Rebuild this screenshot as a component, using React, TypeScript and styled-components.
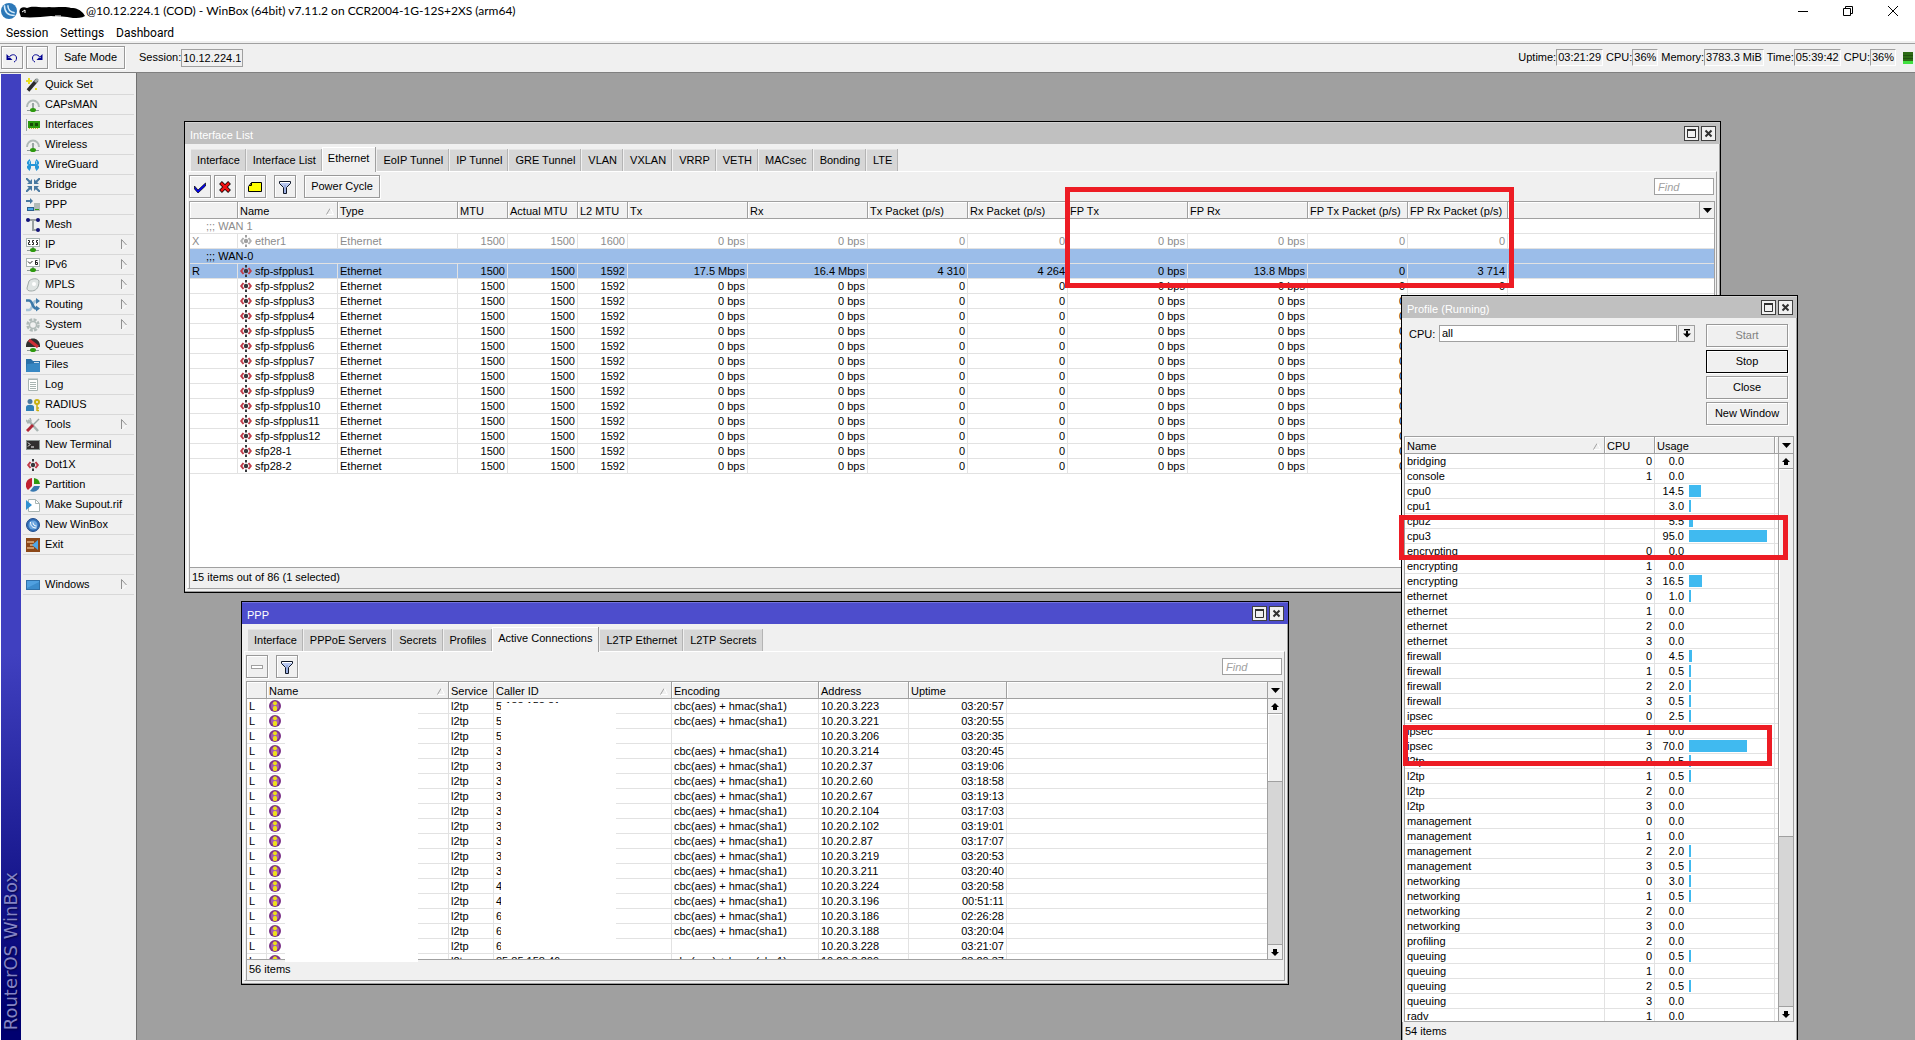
import React from "react";
import styled, { createGlobalStyle, css } from "styled-components";

const FACE = "#f0f0f0";
const LINE = "#a0a0a0";
const GRID = "#e2e2e2";
const UI = '"Liberation Sans", Arial, sans-serif';
const SYS = 'Roboto, "Noto Sans", sans-serif';

const Global = createGlobalStyle`
  *, *::before, *::after { box-sizing: border-box; }
  body { margin: 0; background: ${FACE}; color: #000; font: 11px/15px ${UI}; overflow: hidden; }
  button, input, select { font: inherit; color: inherit; margin: 0; padding: 0; border: 0; border-radius: 0; background: none; outline: 0; }
  svg { display: block; flex: none; }
`;

const Shell = styled.div`
  display: flex;
  flex-direction: column;
  height: 100vh;
`;
const Caption = styled.header`
  display: flex;
  align-items: center;
  height: 22px;
  padding: 0 0 0 1px;
  background: #fff;
  font: 12px/18px Lato, ${SYS};
  white-space: nowrap;
`;
const CaptionText = styled.span`
  flex: 1;
`;
const CaptionButton = styled.button`
  display: grid;
  place-items: center;
  width: 45px;
  height: 22px;
`;
const MenuBar = styled.nav`
  display: flex;
  gap: 12px;
  height: 19px;
  padding-left: 6px;
  background: #fff;
  font: 12px/22px ${SYS};
`;
const MainBar = styled.div`
  display: flex;
  align-items: center;
  gap: 3px;
  height: 32px;
  padding: 2px 2px 0 1px;
  border-bottom: 1px solid #808080;
  box-shadow: inset 0 2px ${FACE}, inset 0 3px ${LINE};
`;
const Raised = styled.button<{ $w?: number; $tone?: "default" | "dim" }>`
  display: grid;
  place-items: center;
  flex: none;
  width: ${(p) => p.$w ?? 22}px;
  height: 23px;
  border: 1px solid ${(p) => (p.$tone === "default" ? "#000" : "#999")};
  box-shadow: inset 1px 1px #fff, 1px 1px #fff;
  color: ${(p) => (p.$tone === "dim" ? "#808080" : "#000")};
  white-space: nowrap;
`;
const Space = styled.span<{ $w: number }>`
  flex: none;
  width: ${(p) => p.$w}px;
`;
const SessionBox = styled.div`
  display: flex;
  align-items: center;
`;
const Field = styled.input<{ $w: number }>`
  width: ${(p) => p.$w}px;
  height: 18px;
  padding: 0 1px;
  border: 1px solid ${LINE};
`;
const Stats = styled.div`
  display: flex;
  align-items: center;
  margin-left: auto;
`;
const Stat = styled.label`
  display: flex;
  align-items: center;
  margin-right: 3px;
`;
const StatValue = styled.output`
  height: 17px;
  padding: 0 1px;
  border: 1px solid #fff;
  border-top-color: ${LINE};
  border-left-color: ${LINE};
`;

const Main = styled.div`
  display: flex;
  flex: 1;
  min-height: 0;
`;
const Brand = styled.div`
  display: flex;
  align-items: center;
  justify-content: center;
  width: 21px;
  margin-top: 1px;
  padding: 0 0 10px;
  border-left: 1px solid #fff;
  background: linear-gradient(#4040c0 0%, #4040c0 60%, #000070 97%);
  color: #8484c4;
  font: 18px/20px "DejaVu Sans", sans-serif;
  text-shadow: -1px 1px 2px #000040;
  writing-mode: vertical-rl;
`;
const BrandText = styled.span`
  margin-top: auto;
  transform: rotate(180deg);
`;
const Side = styled.nav`
  width: 116px;
  padding: 2px 2px 0;
  border-right: 1px solid #707070;
`;
const SideItem = styled.button`
  display: flex;
  align-items: center;
  gap: 5px;
  width: 111px;
  height: 20px;
  padding: 0 6px 0 3px;
  border-bottom: 1px solid #d8d8d8;
  white-space: nowrap;
`;
const SideLabel = styled.span`
  flex: 1;
  text-align: left;
`;
const SideGap = styled.div`
  height: 20px;
  width: 111px;
  border-bottom: 1px solid #d8d8d8;
`;

const Desk = styled.main`
  position: relative;
  flex: 1;
  overflow: hidden;
  background: ${LINE};
`;
type Box = { $x: number; $y: number; $w: number; $h: number };
const Frame = styled.section<Box>`
  position: absolute;
  left: ${(p) => p.$x}px;
  top: ${(p) => p.$y}px;
  width: ${(p) => p.$w}px;
  height: ${(p) => p.$h}px;
  display: flex;
  flex-direction: column;
  border: 1px solid #000;
  background: ${FACE};
  box-shadow: inset -1px -1px ${LINE};
`;
const FrameTitle = styled.div<{ $active?: boolean }>`
  display: flex;
  align-items: center;
  gap: 2px;
  height: 22px;
  padding: 0 4px 0 5px;
  color: #fff;
  background: ${(p) => (p.$active ? "#4d4dcc" : "#c0c0c0")};
  box-shadow: inset 0 1px ${(p) => (p.$active ? "#7474dc" : "#d2d2d2")};
`;
const FrameName = styled.span`
  flex: 1;
  padding-top: 4px;
`;
const FrameButton = styled.button`
  display: grid;
  place-items: center;
  width: 15px;
  height: 15px;
  border: 1px solid #404040;
  background: ${FACE};
`;
const Tabs = styled.div`
  display: flex;
  align-items: flex-end;
  gap: 1px;
  height: 27px;
  padding-left: 6px;
`;
const Tab = styled.button<{ $on?: boolean }>`
  height: 22px;
  padding: 1px 5px 0 6px;
  border-right: 1px solid #b4b4b4;
  background: #d6d6d6;
  box-shadow: inset 0 1px #e4e4e4;
  white-space: nowrap;
  ${(p) =>
    p.$on &&
    css`
      z-index: 1;
      height: 25px;
      margin: 0 0 -1px -1px;
      padding: 0 6px 2px;
      border-right-color: ${LINE};
      background: ${FACE};
      box-shadow: inset 1px 1px #fff;
    `}
`;
const Panel = styled.div`
  display: flex;
  flex-direction: column;
  flex: 1;
  min-height: 0;
  margin: 0 3px 3px 2px;
  padding: 0 1px;
  border: 1px solid ${LINE};
  border-top-color: #fff;
  border-left-color: #fff;
`;
const Tools = styled.div`
  display: flex;
  align-items: center;
  gap: 3px;
  height: 29px;
  padding-right: 1px;
`;
const Find = styled.input`
  width: 60px;
  height: 17px;
  margin-left: auto;
  padding: 0 3px;
  border: 1px solid ${LINE};
  background: #fff;
  font-style: italic;
  &::placeholder { color: ${LINE}; opacity: 1; }
`;
const Sheet = styled.div`
  display: flex;
  flex: 1;
  min-height: 0;
  border: 1px solid ${LINE};
  background: #fff;
`;
const SheetBody = styled.div`
  flex: 1;
  min-width: 0;
  overflow: hidden;
`;
const Grid = styled.table`
  width: 100%;
  table-layout: fixed;
  border-collapse: separate;
  border-spacing: 0;
  line-height: 14px;
`;
const Th = styled.th`
  height: 17px;
  padding: 2px 2px 0;
  border-right: 1px solid ${LINE};
  border-bottom: 1px solid ${LINE};
  background: ${FACE};
  box-shadow: inset 1px 1px #fff;
  font-weight: normal;
  text-align: left;
  white-space: nowrap;
  &:last-child { border-right: 0; padding: 0; }
`;
const HeadInner = styled.span`
  display: flex;
  align-items: center;
  justify-content: space-between;
  padding-right: 1px;
`;
const Tr = styled.tr<{ $tone?: "off" | "sel" }>`
  color: ${(p) => (p.$tone === "off" ? "#8c8c8c" : "#000")};
  background: ${(p) => (p.$tone === "sel" ? "#9bbde9" : "#fff")};
`;
const Td = styled.td<{ $right?: boolean; $note?: boolean }>`
  height: 15px;
  padding: 0 2px;
  padding-left: ${(p) => (p.$note ? 16 : 2)}px;
  border-right: 1px solid ${GRID};
  border-bottom: 1px solid ${GRID};
  text-align: ${(p) => (p.$right ? "right" : "left")};
  white-space: nowrap;
  overflow: hidden;
  &:last-child { border-right: 0; }
`;
const NameCell = styled.span`
  display: flex;
  align-items: center;
  gap: 3px;
  height: 14px;
`;
const UsageCell = styled.span`
  display: flex;
  align-items: center;
  gap: 5px;
  height: 14px;
`;
const UsageValue = styled.span`
  width: 27px;
  text-align: right;
`;
const Bar = styled.span`
  height: 12px;
  background: #40baf0;
`;
const HeadMenu = styled.button`
  display: grid;
  place-items: center;
  width: 15px;
  height: 16px;
  margin-left: auto;
  border-left: 1px solid ${LINE};
  background: ${FACE};
`;
const Scroll = styled.div`
  display: flex;
  flex-direction: column;
  width: 15px;
  background: #d6d6d6;
  border-left: 1px solid ${LINE};
`;
const ScrollHead = styled.button`
  display: grid;
  place-items: center;
  height: 17px;
  border-bottom: 1px solid ${LINE};
  background: ${FACE};
`;
const ScrollStep = styled.button<{ $end?: boolean }>`
  display: grid;
  place-items: center;
  height: 15px;
  margin-top: ${(p) => (p.$end ? "auto" : 0)};
  border-bottom: ${(p) => (p.$end ? 0 : 1)}px solid ${LINE};
  border-top: ${(p) => (p.$end ? 1 : 0)}px solid ${LINE};
  background: ${FACE};
`;
const Thumb = styled.div`
  border-bottom: 1px solid ${LINE};
  background: ${FACE};
  box-shadow: inset 1px 1px #fff;
`;
const Status = styled.div`
  height: 20px;
  padding: 2px 2px 0;
  border-left: 1px solid ${LINE};
`;
const Mask = styled.div<Box>`
  position: absolute;
  left: ${(p) => p.$x}px;
  top: ${(p) => p.$y}px;
  width: ${(p) => p.$w}px;
  height: ${(p) => p.$h}px;
  background: #fff;
`;
const Marker = styled.div<Box>`
  position: absolute;
  left: ${(p) => p.$x}px;
  top: ${(p) => p.$y}px;
  width: ${(p) => p.$w}px;
  height: ${(p) => p.$h}px;
  border: 5px solid #ed1c24;
  pointer-events: none;
`;
const ProfileTop = styled.div`
  display: flex;
  gap: 11px;
  height: 118px;
  padding: 6px 9px 0 7px;
`;
const CpuRow = styled.div`
  display: flex;
  flex: 1;
  align-items: flex-start;
  gap: 1px;
  padding-top: 1px;
`;
const CpuLabel = styled.label`
  width: 29px;
  padding-top: 2px;
`;
const CpuSelect = styled.select`
  flex: 1;
  height: 17px;
  padding-left: 2px;
  border: 1px solid ${LINE};
  background: #fff;
  appearance: none;
`;
const DropButton = styled.button`
  display: grid;
  place-items: center;
  width: 17px;
  height: 17px;
  border: 1px solid ${LINE};
`;
const Actions = styled.div`
  display: flex;
  flex-direction: column;
  gap: 3px;
`;
const ProfileList = styled.div`
  display: flex;
  flex-direction: column;
  height: 586px;
  margin: 0 3px 0 2px;
`;

/* Icons */
const Ic = ({ s = 14, children }: { s?: number; children: React.ReactNode }) => (
  <svg width={s} height={s} viewBox={`0 0 ${s} ${s}`} aria-hidden="true">{children}</svg>
);
const Cap = () => (
  <Ic>
    <path d="M1 9A6 6.500 0 1 1 13 9" fill="none" stroke="#b0bab8" strokeWidth="2" />
    <path d="M4.500 7.500A3 3 0 0 1 9.500 7.500" fill="none" stroke="#dde2e1" />
    <path d="M7 5v6" stroke="#9aa6a4" strokeWidth="2" />
    <path d="M1 12.500h12" stroke="#8e9a98" />
    <ellipse cx="7" cy="12" rx="3" ry="2" fill="#2e9a10" />
  </Ic>
);
const PortShape = ({ off }: { off?: boolean }) => {
  const a = off ? "#b0b0b0" : "#c03a48";
  const b = off ? "#a0a0a0" : "#38383c";
  return (
    <>
      <path d="M3.500 3L1.200 6l2.300 3M8.500 3l2.300 3-2.300 3" fill="none" stroke={a} strokeWidth="2" />
      <circle cx="6" cy="6" r="2.200" fill={b} />
      <path d="M6 0v2.500M6 9.500v2.500" stroke={b} strokeWidth="2" />
    </>
  );
};
const Person = () => (
  <Ic s={12}>
    <circle cx="6" cy="6" r="6" fill="#7b3087" />
    <circle cx="6" cy="6" r="4" fill="#a560ad" />
    <circle cx="6" cy="3.200" r="2" fill="#ece01a" />
    <rect x="4" y="6" width="4" height="5" rx="1.500" fill="#ece01a" />
  </Ic>
);
const Funnel = () => (
  <Ic>
    <path d="M1.500 1.500h11v2l-4 4v6h-3v-6l-4-4z" fill="#b8c8f0" stroke="#101828" />
    <path d="M7 5v8" stroke="#7c92d0" />
    <path d="M2 2.500h10" stroke="#fff" />
  </Ic>
);
const Ball = () => (
  <Ic>
    <circle cx="7" cy="7" r="6.500" fill="#2f6cb4" stroke="#244f8c" />
    <circle cx="7" cy="7" r="4.500" fill="#6aa4de" />
    <path d="M4.500 4c0 4 2 6 6 6M7 4.500c0 2 1.500 3.500 3.500 3.500" fill="none" stroke="#fff" />
  </Ic>
);
const AppLogo = () => (
  <svg width="16" height="16" viewBox="0 0 14 14" aria-hidden="true">
    <circle cx="7" cy="7" r="7" fill="#2c78b8" />
    <path d="M3 2c0 6 3 9 9 9M6 2c0 4 2 6 6 6.500" fill="none" stroke="#d8ecfa" strokeWidth="1.300" />
  </svg>
);
const Turn = ({ back }: { back?: boolean }) => (
  <Ic>
    <g transform={back ? undefined : "matrix(-1 0 0 1 14 0)"}>
      <path d="M4 6.500C6 2.500 11.500 3 11.500 7c0 2-1 3.500-2.500 4" fill="none" stroke="#000090" />
      <path d="M1.500 3v6h6z" fill="#000090" />
      <path d="M3.500 7l1-1" stroke="#fff" />
    </g>
  </Ic>
);
const Plate = ({ t }: { t: "ip" | "v6" }) => (
  <Ic>
    <rect x=".5" y=".5" width="13" height="8" fill="#fff" stroke="#a8b4b2" />
    {t === "ip" ? (
      <path d="M2 2.500h1.500v2H2.500v2h2M8 2.500H6.500v2h1v2H6M12 2.500h-1.500v2h1v2H10" fill="none" stroke="#222" />
    ) : (
      <path d="M2 3.500l2 2L6.500 3M11.500 2.500H9.500v4h2v-2h-2" fill="none" stroke="#222" />
    )}
    <path d="M7 9v2" stroke="#9aa6a4" strokeWidth="2" />
    <path d="M1 12.500h12" stroke="#8e9a98" />
    <ellipse cx="7" cy="12" rx="3" ry="2" fill="#2e9a10" />
  </Ic>
);
const icons: Record<string, React.ReactNode> = {
  "Quick Set": (
    <Ic>
      <path d="M2 12.500L11 2" stroke="#2c2c2c" strokeWidth="3.500" />
      <path d="M9 4l3-3" stroke="#a0a8a8" strokeWidth="3" />
      <path d="M3 0v6M0 3h6M10 10v2" stroke="#e8e020" strokeWidth="2" />
    </Ic>
  ),
  CAPsMAN: <Cap />,
  Interfaces: (
    <Ic>
      <path d="M.5 1v12" stroke="#9aa6a4" />
      <rect x="2" y="3" width="12" height="7" fill="#2e9a10" />
      <path d="M4 5h3v3H4zM9 5h3v3H9z" fill="#184c08" />
      <path d="M3 10.500h10" stroke="#c8b820" strokeDasharray="1 1" />
    </Ic>
  ),
  Wireless: <Cap />,
  WireGuard: (
    <Ic>
      <path d="M3.500 1L1 4v2l1.500 1L1 8v2l2.500 3L5 10V8h4v2l1.500 3L13 10V8l-1.500-1L13 6V4l-2.500-3L9 4v2H5V4z" fill="#2796d8" />
      <path d="M3.500 3v3M10.500 3v3" stroke="#80c8f0" />
    </Ic>
  ),
  Bridge: (
    <Ic>
      <path d="M0 0l5 5M14 0L9 5M0 14l5-5M14 14L9 9" stroke="#4878a0" strokeWidth="2" />
      <path d="M1 6h5V1zM13 6H8V1zM1 8h5v5zM13 8H8v5z" fill="#4878a0" />
    </Ic>
  ),
  PPP: (
    <Ic>
      <path d="M0 3h5" stroke="#4878a0" strokeWidth="2" />
      <path d="M4 0l3 3-3 3z" fill="#4878a0" />
      <rect x="8" y="5" width="6" height="8" fill="#b0bab8" />
      <path d="M9 11.500h4" stroke="#2e9a10" />
      <rect x="1.500" y="9.500" width="6" height="3" fill="#50a8e8" stroke="#2c608c" />
    </Ic>
  ),
  Mesh: (
    <Ic>
      <path d="M2 2h10M7 2v10h5" fill="none" stroke="#9aa0a0" strokeWidth="2" />
      <circle cx="2" cy="2" r="2" fill="#141478" />
      <circle cx="12" cy="2" r="2" fill="#141478" />
      <circle cx="12" cy="12" r="2" fill="#141478" />
    </Ic>
  ),
  IP: <Plate t="ip" />,
  IPv6: <Plate t="v6" />,
  MPLS: (
    <Ic>
      <path d="M1 10L3 3c3-3 9-3 10 0 0 8-4 10-8 10-3 0-4-1-4-3z" fill="#dfe4e3" stroke="#a0aaa8" />
      <circle cx="8" cy="6" r="2" fill="#fff" />
    </Ic>
  ),
  Routing: (
    <Ic>
      <path d="M0 12h3c4 0 3-9 7-9" fill="none" stroke="#a8c4d8" strokeWidth="2.500" />
      <path d="M0 2.500h3c4 0 3 8 7 8" fill="none" stroke="#3c78a8" strokeWidth="2.500" />
      <path d="M10 0l4 3-4 3zM10 7.500l4 3-4 3z" fill="#3c78a8" />
    </Ic>
  ),
  System: (
    <Ic>
      <circle cx="7" cy="7" r="5.500" fill="none" stroke="#b0bab8" strokeWidth="2.500" strokeDasharray="3 1.300" />
      <circle cx="7" cy="7" r="3.500" fill="none" stroke="#b0bab8" strokeWidth="1.500" />
    </Ic>
  ),
  Queues: (
    <Ic>
      <path d="M0 8C0-2 14-2 14 8v1H0z" fill="#303030" />
      <path d="M3 2l9 7" stroke="#d03038" strokeWidth="3" />
      <path d="M1 12.500h12" stroke="#8e9a98" />
      <ellipse cx="7" cy="12" rx="3" ry="2" fill="#2e9a10" />
    </Ic>
  ),
  Files: (
    <Ic>
      <path d="M0 1h5l2 2h7v11H0z" fill="#2a70a8" />
      <path d="M0 14l1-8 13-1v9z" fill="#3888c4" />
      <path d="M8 4.500h5" stroke="#c8dcec" />
    </Ic>
  ),
  Log: (
    <Ic>
      <path d="M2.500 1.500h9v11h-9z" fill="#fff" stroke="#a8b4b2" />
      <path d="M4 4.500h6M4 6.500h6M4 8.500h6M4 10.500h6M3 0v2M5 0v2M7 0v2M9 0v2M11 0v2" stroke="#a8b4b2" />
    </Ic>
  ),
  RADIUS: (
    <Ic>
      <circle cx="4" cy="3.500" r="2.500" fill="#4878a0" />
      <path d="M0 13V9c0-3 8-3 8 0v4z" fill="#3080b8" />
      <circle cx="11" cy="4" r="2" fill="none" stroke="#c8b010" strokeWidth="2" />
      <path d="M11 6v7M11 10h2M11 12.500h2" stroke="#c8b010" strokeWidth="1.500" />
    </Ic>
  ),
  Tools: (
    <Ic>
      <path d="M2 2l10 11" stroke="#a8b4b2" strokeWidth="2.500" />
      <path d="M0 2l2 3 3-2-1-3" fill="none" stroke="#a8b4b2" strokeWidth="1.500" />
      <path d="M13 1L7 7" stroke="#98a4a2" strokeWidth="1.500" />
      <path d="M7 7l-6 6" stroke="#b02838" strokeWidth="3" />
    </Ic>
  ),
  "New Terminal": (
    <Ic>
      <rect x=".5" y="2.500" width="13" height="9" fill="#303030" stroke="#8a9492" />
      <path d="M2 4.500L4 6.500 2 8.500M5 9h3" fill="none" stroke="#fff" />
    </Ic>
  ),
  Dot1X: <Ic><g transform="translate(1 1)"><PortShape /></g></Ic>,
  Partition: (
    <Ic>
      <path d="M6 0v8l-4 4A7 7 0 0 1 6 0z" fill="#c02030" />
      <path d="M8 0a7 7 0 0 1 6 6H8z" fill="#2e9a10" />
      <path d="M14 8a7 7 0 0 1-10 5l4-5z" fill="#3878b0" />
    </Ic>
  ),
  "Make Supout.rif": (
    <Ic>
      <path d="M2.500 1.500h7l4 4v8h-11z" fill="#fff" stroke="#a8b4b2" />
      <path d="M9.500 1.500v4h4" fill="none" stroke="#a8b4b2" />
      <path d="M0 2l6 5-6 5z" fill="#3090d0" />
    </Ic>
  ),
  "New WinBox": <Ball />,
  Exit: (
    <Ic>
      <rect width="14" height="14" fill="#8c4818" />
      <path d="M1 4h7M1 10h7M4 7h3" stroke="#e0b080" strokeWidth="1.500" />
      <path d="M6 7l6-5v10z" fill="#50a8e8" />
    </Ic>
  ),
  Windows: (
    <Ic>
      <rect x=".5" y="2.500" width="13" height="9" fill="#50a0e0" stroke="#3070a8" />
      <path d="M1 10l12-6v7H1z" fill="#3c8ccc" />
    </Ic>
  ),
};
const SubArrow = () => (
  <svg width="7" height="11" viewBox="0 0 7 11" aria-hidden="true">
    <path d="M.5 10V.5L5.500 6" fill="none" stroke="#909090" />
    <path d="M5.500 6L1 10.500" stroke="#fff" />
  </svg>
);
const SortMark = () => (
  <svg width="8" height="7" viewBox="0 0 8 7" aria-hidden="true">
    <path d="M.5 6.500L4 .5" stroke="#a0a0a0" fill="none" />
    <path d="M4.500 .5L7.500 6.500H1" stroke="#fff" fill="none" />
  </svg>
);
const Down = () => (
  <svg width="9" height="5" viewBox="0 0 9 5" aria-hidden="true"><path d="M0 0h9L4.500 5z" /></svg>
);
const Step = ({ down }: { down?: boolean }) => (
  <svg width="8" height="7" viewBox="0 0 8 7" aria-hidden="true">
    <path d={down ? "M2 0h4v3h2L4 7 0 3h2z" : "M2 7h4V4h2L4 0 0 4h2z"} />
  </svg>
);
const Max = () => (
  <svg width="9" height="9" viewBox="0 0 9 9" aria-hidden="true">
    <path d="M.5 1v7.500h8V1" fill="none" stroke="#303030" />
    <path d="M0 1h9" stroke="#303030" strokeWidth="2" />
  </svg>
);
const Cross = () => (
  <svg width="9" height="9" viewBox="0 0 9 9" aria-hidden="true">
    <path d="M1.500 1.500l6 6M7.500 1.500l-6 6" stroke="#303030" strokeWidth="2" />
  </svg>
);

/* Data */
const sideMenu: [string, boolean][] = [
  ["Quick Set", false], ["CAPsMAN", false], ["Interfaces", false], ["Wireless", false],
  ["WireGuard", false], ["Bridge", false], ["PPP", false], ["Mesh", false], ["IP", true],
  ["IPv6", true], ["MPLS", true], ["Routing", true], ["System", true], ["Queues", false],
  ["Files", false], ["Log", false], ["RADIUS", false], ["Tools", true], ["New Terminal", false],
  ["Dot1X", false], ["Partition", false], ["Make Supout.rif", false], ["New WinBox", false],
  ["Exit", false],
];
const stats = [["Uptime:", "03:21:29"], ["CPU:", "36%"], ["Memory:", "3783.3 MiB"], ["Time:", "05:39:42"], ["CPU:", "36%"]];
const ifCols: [string, number][] = [
  ["", 48], ["Name", 100], ["Type", 120], ["MTU", 50], ["Actual MTU", 70], ["L2 MTU", 50],
  ["Tx", 120], ["Rx", 120], ["Tx Packet (p/s)", 100], ["Rx Packet (p/s)", 100], ["FP Tx", 120],
  ["FP Rx", 120], ["FP Tx Packet (p/s)", 100], ["FP Rx Packet (p/s)", 100],
];
type IfRow = { note?: string; flag?: string; name?: string; l2?: string; v?: string[]; tone?: "off" | "sel" };
const idle = ["0 bps", "0 bps", "0", "0", "0 bps", "0 bps", "0", "0"];
const ports = [...Array.from({ length: 11 }, (_, i) => `sfp-sfpplus${i + 2}`), "sfp28-1", "sfp28-2"];
const ifRows: IfRow[] = [
  { note: ";;; WAN 1", tone: "off" },
  { flag: "X", name: "ether1", l2: "1600", v: idle, tone: "off" },
  { note: ";;; WAN-0", tone: "sel" },
  { flag: "R", name: "sfp-sfpplus1", l2: "1592", v: ["17.5 Mbps", "16.4 Mbps", "4 310", "4 264", "0 bps", "13.8 Mbps", "0", "3 714"], tone: "sel" },
  ...ports.map((name) => ({ flag: "", name, l2: "1592", v: idle })),
];
const pppCols: [string, number][] = [["", 20], ["Name", 182], ["Service", 45], ["Caller ID", 178], ["Encoding", 147], ["Address", 90], ["Uptime", 98]];
const pppRows: [string, boolean, string, string][] = [
  ["5.188.158.81", true, "10.20.3.223", "03:20:57"], ["5", true, "10.20.3.221", "03:20:55"],
  ["5", false, "10.20.3.206", "03:20:35"], ["3", true, "10.20.3.214", "03:20:45"],
  ["3", true, "10.20.2.37", "03:19:06"], ["3", true, "10.20.2.60", "03:18:58"],
  ["3", true, "10.20.2.67", "03:19:13"], ["3", true, "10.20.2.104", "03:17:03"],
  ["3", true, "10.20.2.102", "03:19:01"], ["3", true, "10.20.2.87", "03:17:07"],
  ["3", true, "10.20.3.219", "03:20:53"], ["3", true, "10.20.3.211", "03:20:40"],
  ["4", true, "10.20.3.224", "03:20:58"], ["4", true, "10.20.3.196", "00:51:11"],
  ["6", true, "10.20.3.186", "02:26:28"], ["6", true, "10.20.3.188", "03:20:04"],
  ["6", false, "10.20.3.228", "03:21:07"], ["85.85.158.46", true, "10.20.3.209", "03:20:37"],
];
const usage: [string, string, number][] = [
  ["bridging", "0", 0], ["console", "1", 0], ["cpu0", "", 14.5], ["cpu1", "", 3], ["cpu2", "", 5.5],
  ["cpu3", "", 95], ["encrypting", "0", 0], ["encrypting", "1", 0], ["encrypting", "3", 16.5],
  ["ethernet", "0", 1], ["ethernet", "1", 0], ["ethernet", "2", 0], ["ethernet", "3", 0],
  ["firewall", "0", 4.5], ["firewall", "1", 0.5], ["firewall", "2", 2], ["firewall", "3", 0.5],
  ["ipsec", "0", 2.5], ["ipsec", "1", 0], ["ipsec", "3", 70], ["l2tp", "0", 0.5], ["l2tp", "1", 0.5],
  ["l2tp", "2", 0], ["l2tp", "3", 0], ["management", "0", 0], ["management", "1", 0],
  ["management", "2", 2], ["management", "3", 0.5], ["networking", "0", 3], ["networking", "1", 0.5],
  ["networking", "2", 0], ["networking", "3", 0], ["profiling", "2", 0], ["queuing", "0", 0.5],
  ["queuing", "1", 0], ["queuing", "2", 0.5], ["queuing", "3", 0], ["radv", "1", 0],
];

const Cols = ({ cols }: { cols: [string, number][] }) => (
  <colgroup>
    {cols.map(([n, w], i) => <col key={n + i} style={{ width: w }} />)}
    <col />
  </colgroup>
);
const Head = ({ cols, sorted, menu }: { cols: [string, number][]; sorted: string[]; menu?: boolean }) => (
  <thead>
    <tr>
      {cols.map(([n], i) => (
        <Th key={n + i} scope="col">{sorted.includes(n) ? <HeadInner>{n}<SortMark /></HeadInner> : n}</Th>
      ))}
      <Th>{menu && <HeadMenu aria-label="Columns"><Down /></HeadMenu>}</Th>
    </tr>
  </thead>
);
const TitleRow = ({ name, active }: { name: string; active?: boolean }) => (
  <FrameTitle $active={active}>
    <FrameName>{name}</FrameName>
    <FrameButton aria-label="Maximize"><Max /></FrameButton>
    <FrameButton aria-label="Close"><Cross /></FrameButton>
  </FrameTitle>
);
const TabRow = ({ tabs, on }: { tabs: string[]; on: string }) => (
  <Tabs role="tablist">
    {tabs.map((t) => <Tab key={t} role="tab" aria-selected={t === on} $on={t === on}>{t}</Tab>)}
  </Tabs>
);
const ScrollBar = ({ thumb }: { thumb: number }) => (
  <Scroll>
    <ScrollHead aria-label="Columns"><Down /></ScrollHead>
    <ScrollStep aria-label="Scroll up"><Step /></ScrollStep>
    <Thumb style={{ height: thumb }} />
    <ScrollStep $end aria-label="Scroll down"><Step down /></ScrollStep>
  </Scroll>
);

const InterfaceWindow = () => (
  <Frame $x={47} $y={48} $w={1537} $h={472} aria-label="Interface List">
    <TitleRow name="Interface List" />
    <TabRow
      on="Ethernet"
      tabs={["Interface", "Interface List", "Ethernet", "EoIP Tunnel", "IP Tunnel", "GRE Tunnel", "VLAN", "VXLAN", "VRRP", "VETH", "MACsec", "Bonding", "LTE"]}
    />
    <Panel>
      <Tools>
        <Raised aria-label="Enable"><Ic><path d="M1.500 6l3.500 4L12.500 3v3L5 13 1.500 9z" fill="#0000f0" stroke="#000" strokeWidth=".7" /></Ic></Raised>
        <Raised aria-label="Disable"><Ic><path d="M2.500 2.500l9 9M11.500 2.500l-9 9" stroke="#000" strokeWidth="4" /><path d="M3 3l8 8M11 3l-8 8" stroke="#f01010" strokeWidth="2.500" /></Ic></Raised>
        <Space $w={2} />
        <Raised aria-label="Comment"><Ic><path d="M.5 11.500v-5L3.500 2.500h10v9z" fill="#ffff00" stroke="#000" /><path d="M1 5.500h2.500V3" fill="none" stroke="#000" /></Ic></Raised>
        <Space $w={2} />
        <Raised aria-label="Filter"><Funnel /></Raised>
        <Space $w={2} />
        <Raised $w={76}>Power Cycle</Raised>
        <Find placeholder="Find" aria-label="Find" />
      </Tools>
      <Sheet>
        <SheetBody>
          <Grid>
            <Cols cols={ifCols} />
            <Head cols={ifCols} sorted={["Name"]} menu />
            <tbody>
              {ifRows.map((r, i) =>
                r.note ? (
                  <Tr key={i} $tone={r.tone}><Td colSpan={15} $note>{r.note}</Td></Tr>
                ) : (
                  <Tr key={i} $tone={r.tone}>
                    <Td>{r.flag}</Td>
                    <Td><NameCell><Ic s={12}><PortShape off={r.tone === "off"} /></Ic>{r.name}</NameCell></Td>
                    <Td>Ethernet</Td>
                    {["1500", "1500", r.l2, ...(r.v ?? [])].map((v, j) => <Td key={j} $right>{v}</Td>)}
                    <Td />
                  </Tr>
                )
              )}
            </tbody>
          </Grid>
        </SheetBody>
      </Sheet>
      <Status>15 items out of 86 (1 selected)</Status>
    </Panel>
  </Frame>
);

const PppWindow = () => (
  <Frame $x={104} $y={528} $w={1048} $h={384} aria-label="PPP">
    <TitleRow name="PPP" active />
    <TabRow on="Active Connections" tabs={["Interface", "PPPoE Servers", "Secrets", "Profiles", "Active Connections", "L2TP Ethernet", "L2TP Secrets"]} />
    <Panel>
      <Tools>
        <Raised aria-label="Remove"><Ic><rect x="1.500" y="5.500" width="11" height="3" fill="#fff" stroke="#a0a0a0" /></Ic></Raised>
        <Space $w={2} />
        <Raised aria-label="Filter"><Funnel /></Raised>
        <Find placeholder="Find" aria-label="Find" />
      </Tools>
      <Sheet>
        <SheetBody>
          <Grid>
            <Cols cols={pppCols} />
            <Head cols={pppCols} sorted={["Name", "Caller ID"]} />
            <tbody>
              {pppRows.map(([caller, enc, addr, up], i) => (
                <Tr key={i}>
                  <Td>L</Td>
                  <Td><NameCell><Person /></NameCell></Td>
                  <Td>l2tp</Td>
                  <Td>{caller}</Td>
                  <Td>{enc && "cbc(aes) + hmac(sha1)"}</Td>
                  <Td>{addr}</Td>
                  <Td $right>{up}</Td>
                  <Td />
                </Tr>
              ))}
            </tbody>
          </Grid>
        </SheetBody>
        <ScrollBar thumb={68} />
      </Sheet>
      <Status>56 items</Status>
    </Panel>
    <Mask $x={43} $y={98} $w={133} $h={262} />
    <Mask $x={259} $y={101} $w={115} $h={250} />
  </Frame>
);

const profCols: [string, number][] = [["Name", 200], ["CPU", 50], ["Usage", 120]];
const ProfileWindow = () => (
  <Frame $x={1264} $y={222} $w={397} $h={770} aria-label="Profile">
    <TitleRow name="Profile (Running)" />
    <ProfileTop>
      <CpuRow>
        <CpuLabel htmlFor="cpu">CPU:</CpuLabel>
        <CpuSelect id="cpu"><option>all</option></CpuSelect>
        <DropButton aria-label="Open CPU list">
          <svg width="8" height="9" viewBox="0 0 8 9" aria-hidden="true"><path d="M1 0h6v1.500H1zM3 2h2v2.500h3L4 8.500 0 4.500h3z" /></svg>
        </DropButton>
      </CpuRow>
      <Actions>
        <Raised $w={82} $tone="dim">Start</Raised>
        <Raised $w={82} $tone="default">Stop</Raised>
        <Raised $w={82}>Close</Raised>
        <Raised $w={82}>New Window</Raised>
      </Actions>
    </ProfileTop>
    <ProfileList>
      <Sheet>
        <SheetBody>
          <Grid>
            <Cols cols={profCols} />
            <Head cols={profCols} sorted={["Name"]} />
            <tbody>
              {usage.map(([n, c, u], i) => (
                <Tr key={i}>
                  <Td>{n}</Td>
                  <Td $right>{c}</Td>
                  <Td>
                    <UsageCell>
                      <UsageValue>{u.toFixed(1)}</UsageValue>
                      {u > 0 && <Bar style={{ width: Math.max(2, Math.floor(u * 0.83)) }} />}
                    </UsageCell>
                  </Td>
                  <Td />
                </Tr>
              ))}
            </tbody>
          </Grid>
        </SheetBody>
        <ScrollBar thumb={368} />
      </Sheet>
    </ProfileList>
    <Status>54 items</Status>
  </Frame>
);

export default function App() {
  return (
    <Shell>
      <Global />
      <Caption>
        <AppLogo />
        <Space $w={2} />
        <svg width="67" height="15" viewBox="0 0 67 15" aria-hidden="true">
          <path d="M1 10C-1 5 3 2 8 4 14 1 20 4 30 3c8 1 16-1 22 1 6 0 9 2 12 5l2 3c-3 2-8 2-12 2-8-2-14-1-22-2-10 1-20 2-30 1z" />
          <path d="M3 8l3-2v3M36 12h6" stroke="#fff" fill="none" />
        </svg>
        <CaptionText>@10.12.224.1 (COD) - WinBox (64bit) v7.11.2 on CCR2004-1G-12S+2XS (arm64)</CaptionText>
        <CaptionButton aria-label="Minimize"><svg width="10" height="10" viewBox="0 0 10 10"><path d="M0 5.500h10" stroke="#000" /></svg></CaptionButton>
        <CaptionButton aria-label="Restore"><svg width="10" height="10" viewBox="0 0 10 10"><path d="M.5 2.500h7v7h-7zM2.500 2V.5h7v7H8" fill="none" stroke="#000" /></svg></CaptionButton>
        <CaptionButton aria-label="Close"><svg width="10" height="10" viewBox="0 0 10 10"><path d="M0 0l10 10M10 0L0 10" stroke="#000" /></svg></CaptionButton>
      </Caption>
      <MenuBar>
        <button>Session</button>
        <button>Settings</button>
        <button>Dashboard</button>
      </MenuBar>
      <MainBar>
        <Raised aria-label="Undo"><Turn back /></Raised>
        <Raised aria-label="Redo"><Turn /></Raised>
        <Space $w={2} />
        <Raised $w={69}>Safe Mode</Raised>
        <Space $w={8} />
        <SessionBox>
          <label htmlFor="session">Session:</label>
          <Field id="session" $w={62} readOnly value="10.12.224.1" />
        </SessionBox>
        <Stats>
          {stats.map(([k, v], i) => (
            <Stat key={i}>{k}<StatValue>{v}</StatValue></Stat>
          ))}
          <Space $w={4} />
          <svg width="10" height="12" viewBox="0 0 10 12" aria-hidden="true">
            <rect width="10" height="10" fill="#2c6a14" />
            <path d="M0 3.500h10M0 6.500h10" stroke="#205010" />
            <rect y="9" width="10" height="3" fill="#40e040" />
          </svg>
        </Stats>
      </MainBar>
      <Main>
        <Brand><BrandText>RouterOS WinBox</BrandText></Brand>
        <Side>
          {sideMenu.map(([n, sub]) => (
            <SideItem key={n}>{icons[n]}<SideLabel>{n}</SideLabel>{sub && <SubArrow />}</SideItem>
          ))}
          <SideGap />
          <SideItem>{icons.Windows}<SideLabel>Windows</SideLabel><SubArrow /></SideItem>
        </Side>
        <Desk>
          <InterfaceWindow />
          <PppWindow />
          <ProfileWindow />
          <Marker $x={928} $y={114} $w={449} $h={101} />
          <Marker $x={1262} $y={442} $w={389} $h={45} />
          <Marker $x={1266} $y={652} $w={369} $h={41} />
        </Desk>
      </Main>
    </Shell>
  );
}
